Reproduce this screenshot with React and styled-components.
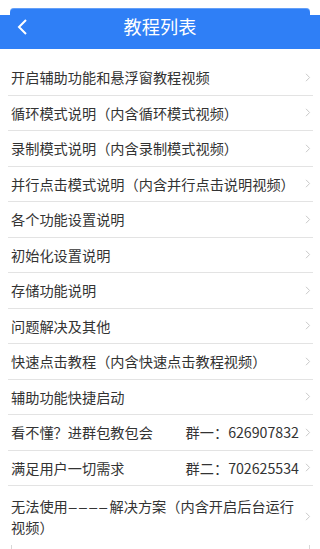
import React from "react";
import styled, { createGlobalStyle } from "styled-components";

const BLUE = "#2f7ff6";
const TEXT = "#333333";
const LINE = "#e3e3e3";

const GlobalStyle = createGlobalStyle`
  html, body {
    margin: 0;
    padding: 0;
    background: #ffffff;
  }
  body {
    font-family: "Noto Sans CJK SC", "Noto Sans", sans-serif;
    overflow: hidden;
  }
`;

const Page = styled.div`
  width: 320px;
  height: 549px;
  padding-top: 8px;
  box-sizing: border-box;
  overflow: hidden;
`;

const TopTab = styled.div`
  height: 7px;
  margin: 0 10px;
  background: ${BLUE};
  border-radius: 4px 4px 0 0;
  box-shadow: inset 0 1px 0 rgba(255, 255, 255, 0.25);
`;

const Header = styled.div`
  height: 34px;
  background: ${BLUE};
  display: flex;
  align-items: center;
  justify-content: center;
  position: relative;
`;

const BackButton = styled.div`
  position: absolute;
  left: 16px;
  top: 4px;
  width: 14px;
  height: 16px;
  display: flex;
  align-items: center;
`;

const Title = styled.div`
  color: #ffffff;
  font-size: 18.2px;
  line-height: 20px;
  margin-top: -12px;
`;

const List = styled.div`
  margin-top: 11px;
  padding: 0 7px 0 8px;
`;

const Row = styled.div`
  display: flex;
  align-items: center;
  min-height: ${({ $tall }) => ($tall ? "auto" : "35.5px")};
  padding: ${({ $tall }) => ($tall ? "10px 0 8px 3px" : "0 0 0 3px")};
  box-sizing: border-box;
  border-bottom: ${({ $last }) => ($last ? "none" : `1px solid ${LINE}`)};
  color: ${TEXT};
  font-size: 14.2px;
  line-height: 20px;
`;

const Label = styled.div`
  flex: 1;
`;

const Dashes = styled.span`
  font-family: "Liberation Sans", sans-serif;
  letter-spacing: 2.3px;
  margin-left: 1px;
`;

const Extra = styled.div`
  margin-right: 2px;
  white-space: nowrap;
`;

const Arrow = styled.svg`
  flex: none;
  width: 6px;
  height: 9px;
  margin-left: 4px;
  margin-right: 2px;
`;

const Footer = styled.div`
  margin: 0 10px 0 11px;
  height: 20px;
  border-left: 1px solid #d8d8d8;
  border-right: 1px solid #d8d8d8;
`;

const items = [
  { label: "开启辅助功能和悬浮窗教程视频" },
  { label: "循环模式说明（内含循环模式视频）" },
  { label: "录制模式说明（内含录制模式视频）" },
  { label: "并行点击模式说明（内含并行点击说明视频）" },
  { label: "各个功能设置说明" },
  { label: "初始化设置说明" },
  { label: "存储功能说明" },
  { label: "问题解决及其他" },
  { label: "快速点击教程（内含快速点击教程视频）" },
  { label: "辅助功能快捷启动" },
  { label: "看不懂？进群包教包会", extra: "群一：626907832" },
  { label: "满足用户一切需求", extra: "群二：702625534" },
  {
    label: (
      <>
        无法使用<Dashes>––––</Dashes>解决方案（内含开启后台运行视频）
      </>
    ),
    tall: true,
  },
];

const ChevronRight = () => (
  <Arrow viewBox="0 0 6 9">
    <path d="M1 0.8 L4.6 4.5 L1 8.2" fill="none" stroke="#c9c9c9" strokeWidth="1" />
  </Arrow>
);

export default function App() {
  return (
    <Page>
      <GlobalStyle />
      <TopTab />
      <Header>
        <BackButton>
          <svg width="12" height="16" viewBox="0 0 12 16">
            <path d="M10 1 L3 8 L10 15" fill="none" stroke="#ffffff" strokeWidth="2" />
          </svg>
        </BackButton>
        <Title>教程列表</Title>
      </Header>
      <List>
        {items.map((item, i) => (
          <Row key={i} $tall={item.tall} $last={i === items.length - 1}>
            <Label>{item.label}</Label>
            {item.extra && <Extra>{item.extra}</Extra>}
            <ChevronRight />
          </Row>
        ))}
      </List>
      <Footer />
    </Page>
  );
}
